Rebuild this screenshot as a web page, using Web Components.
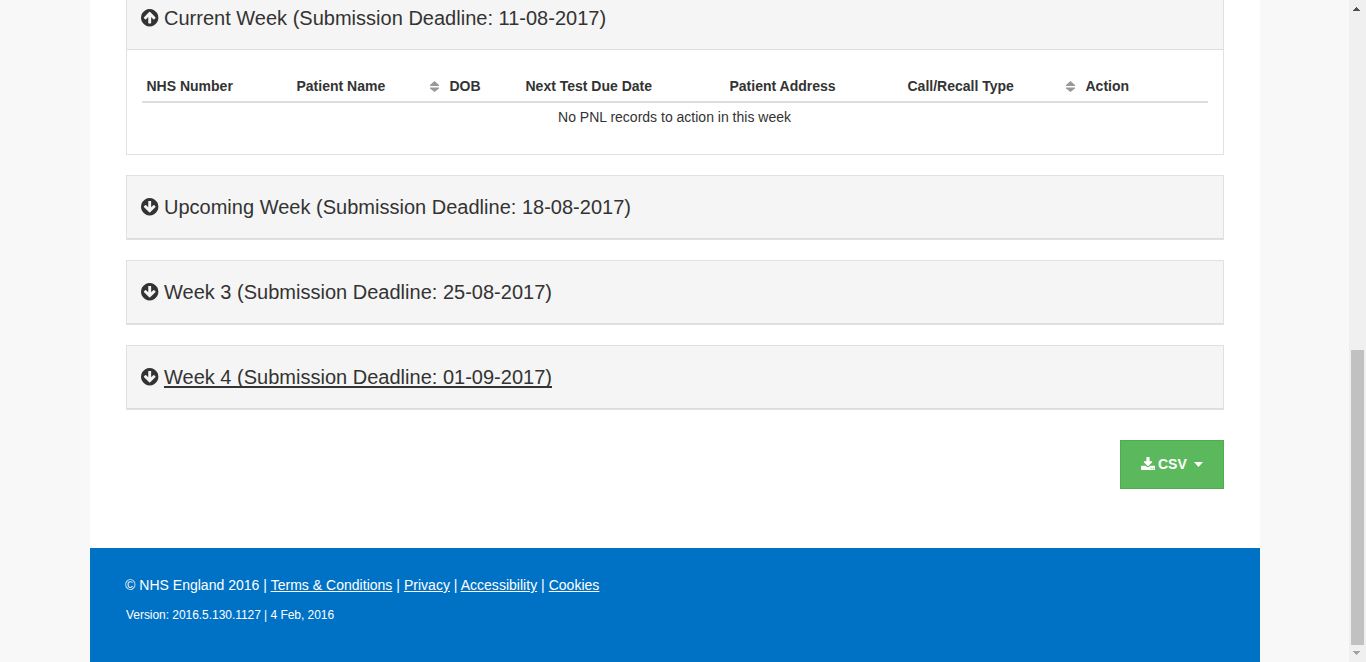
<!DOCTYPE html>
<html lang="en">
<head>
<meta charset="utf-8">
<title>PNL records</title>
<style>
html, body { margin: 0; height: 100%; overflow: hidden; }
body { font: 14px/20px "Liberation Sans", Arial, sans-serif; color: #333; background: #f8f8f8; }
</style>
</head>
<body>
<nhs-shell>
  <week-panel open heading="Current Week (Submission Deadline: 11-08-2017)"><record-table></record-table></week-panel>
  <week-panel heading="Upcoming Week (Submission Deadline: 18-08-2017)"></week-panel>
  <week-panel heading="Week 3 (Submission Deadline: 25-08-2017)"></week-panel>
  <week-panel active heading="Week 4 (Submission Deadline: 01-09-2017)"></week-panel>
  <csv-button>CSV</csv-button>
  <nhs-footer slot="footer"></nhs-footer>
</nhs-shell>
<script>
class BaseElement extends HTMLElement {
  connectedCallback() {
    if (!this.shadowRoot) this.attachShadow({ mode: 'open' }).innerHTML = this.render();
  }
}

customElements.define('nhs-shell', class extends BaseElement {
  render() {
    return `<style>
      :host { display: grid; grid-template-columns: 90px 1170px 1fr 17px; height: 662px; overflow: hidden; }
      .page { grid-column: 2; background: #fff; display: flex; flex-direction: column; height: 662px; min-height: 0; }
      .content { box-sizing: border-box; height: 548px; flex: none; padding: 0 36px; display: flex; flex-direction: column; gap: 20px; }
      .content ::slotted(*) { flex: none; }
      scroll-bar { grid-column: 4; }
    </style>
    <div class="page"><div class="content"><slot></slot></div><slot name="footer"></slot></div>
    <scroll-bar></scroll-bar>`;
  }
});

customElements.define('week-panel', class extends BaseElement {
  render() {
    return `<style>
      :host { display: block; box-sizing: border-box; border: 1px solid #e1e1e1; background: #fff; }
      :host([open]) { margin-top: -14px; height: 169px; }
      .head { box-sizing: border-box; height: 63px; padding: 0 15px 1px 14.2px; display: flex; align-items: center; background: #f5f5f5; border-bottom: 1px solid #ddd; font-size: 20px; line-height: 22px; letter-spacing: 0.01px; }
      arrow-icon { margin: 0.6px 5.4px 0 0; }
      :host([active]) .title { text-decoration: underline; text-decoration-thickness: 2px; text-underline-offset: 1.5px; text-decoration-skip-ink: none; }
      .body { padding: 20px 15px 0; }
      :host(:not([open])) .body { display: none; }
    </style>
    <div class="head"><arrow-icon ${this.hasAttribute('open') ? 'up' : ''}></arrow-icon><span class="title">${this.getAttribute('heading')}</span></div>
    <div class="body"><slot></slot></div>`;
  }
});

customElements.define('arrow-icon', class extends BaseElement {
  render() {
    return `<style>
      :host { display: block; width: 17.4px; height: 17.4px; }
      :host([up]) svg { transform: scaleY(-1); }
      svg { display: block; width: 100%; height: 100%; fill: #333; overflow: visible; }
    </style>
    <svg viewBox="128 128 1536 1536"><path d="M1412 897q0-27-18-45l-91-91q-18-18-45-18t-45 18l-189 189v-502q0-26-19-45t-45-19h-128q-26 0-45 19t-19 45v502l-189-189q-19-19-45-19t-45 19l-91 91q-18 18-18 45t18 45l362 362 91 91q18 18 45 18t45-18l91-91 362-362q18-18 18-45zm252-1q0 209-103 385.500t-279.500 279.500-385.500 103-385.500-103-279.500-279.500-103-385.500 103-385.500 279.500-279.500 385.500-103 385.500 103 279.500 279.500 103 385.500z"/></svg>`;
  }
});

customElements.define('record-table', class extends BaseElement {
  render() {
    const sort = '<svg width="9" height="11" viewBox="0 0 9 11"><path fill="#999" d="M4.500 0 9 4v1H0V4zM0 6.500h9v1L4.500 11 0 7.500z"/></svg>';
    const cols = [['NHS Number'], ['Patient Name', 1], ['DOB'], ['Next Test Due Date'], ['Patient Address'], ['Call/Recall Type', 1], ['Action']];
    return `<style>
      :host { display: block; }
      .row { display: grid; grid-template-columns: 150px 153px 76px 204px 178px 178px 127px; height: 31px; border-bottom: 2px solid #ddd; font-weight: bold; }
      .cell { display: flex; justify-content: space-between; align-items: center; padding: 1px 6px 0 4.500px; }
      svg { margin-top: 1px; }
      .empty { padding: 4px 1px 0 0; text-align: center; }
    </style>
    <div class="row">${cols.map(([t, s]) => `<div class="cell"><span>${t}</span>${s ? sort : ''}</div>`).join('')}</div>
    <div class="empty">No PNL records to action in this week</div>`;
  }
});

customElements.define('csv-button', class extends BaseElement {
  render() {
    return `<style>
      :host { display: block; align-self: flex-end; margin-top: 10px; }
      button { box-sizing: border-box; width: 104px; height: 49px; padding: 0 0 1px 20px; margin: 0; display: flex; align-items: center; border: 1px solid #4cae4c; background: #5cb85c; color: #fff; font: bold 14px/20px "Liberation Sans", Arial, sans-serif; }
      .dl { width: 14px; height: 13px; margin: 0 3px 2px 0; }
      .caret { width: 9px; height: 5px; margin: 1px 0 0 7px; }
      svg { fill: #fff; flex: none; }
    </style>
    <button type="button"><svg class="dl" viewBox="64 0 1664 1536" preserveAspectRatio="none"><path d="M1344 1344q0-26-19-45t-45-19-45 19-19 45 19 45 45 19 45-19 19-45zm256 0q0-26-19-45t-45-19-45 19-19 45 19 45 45 19 45-19 19-45zm128-224v320q0 40-28 68t-68 28h-1472q-40 0-68-28t-28-68v-320q0-40 28-68t68-28h465l135 136q58 56 136 56t136-56l136-136h464q40 0 68 28t28 68zm-325-569q17 41-14 70l-448 448q-18 19-45 19t-45-19l-448-448q-31-29-14-70 17-39 59-39h256v-448q0-26 19-45t45-19h256q26 0 45 19t19 45v448h256q42 0 59 39z"/></svg><slot></slot><svg class="caret" viewBox="0 0 9 5"><path d="M0 0h9L4.500 5z"/></svg></button>`;
  }
});

customElements.define('nhs-footer', class extends BaseElement {
  render() {
    return `<style>
      :host { display: block; box-sizing: border-box; height: 114px; flex: none; padding: 27px 35px 0; background: #0072c6; color: #fff; }
      p { margin: 0 0 10px; letter-spacing: 0.02px; }
      .version { font-size: 12px; padding-left: 1px; letter-spacing: -0.045px; }
      a { color: inherit; text-decoration: underline; }
    </style>
    <p>© NHS England 2016 | <a href="#">Terms &amp; Conditions</a> | <a href="#">Privacy</a> | <a href="#">Accessibility</a> | <a href="#">Cookies</a></p>
    <p class="version">Version: 2016.5.130.1127 | 4 Feb, 2016</p>`;
  }
});

customElements.define('scroll-bar', class extends BaseElement {
  render() {
    return `<style>
      :host { display: grid; grid-template-rows: 350px 295px 17px; justify-items: center; background: #f0f0f0; }
      .thumb { width: 13px; background: #c1c1c1; }
      svg { display: block; width: 7px; height: 4px; }
      .up { margin: 7px 2px 0 0; fill: #505050; }
      .down { margin: 6px 2px 0 0; fill: #a3a3a3; }
    </style>
    <svg class="up" viewBox="0 0 7 4" shape-rendering="crispEdges"><path d="M3 0h1v1h1v1h1v1h1v1H0V3h1V2h1V1h1z"/></svg>
    <div class="thumb"></div>
    <svg class="down" viewBox="0 0 7 4" shape-rendering="crispEdges"><path d="M0 0h7v1H6v1H5v1H4v1H3V3H2V2H1V1H0z"/></svg>`;
  }
});
</script>
</body>
</html>
